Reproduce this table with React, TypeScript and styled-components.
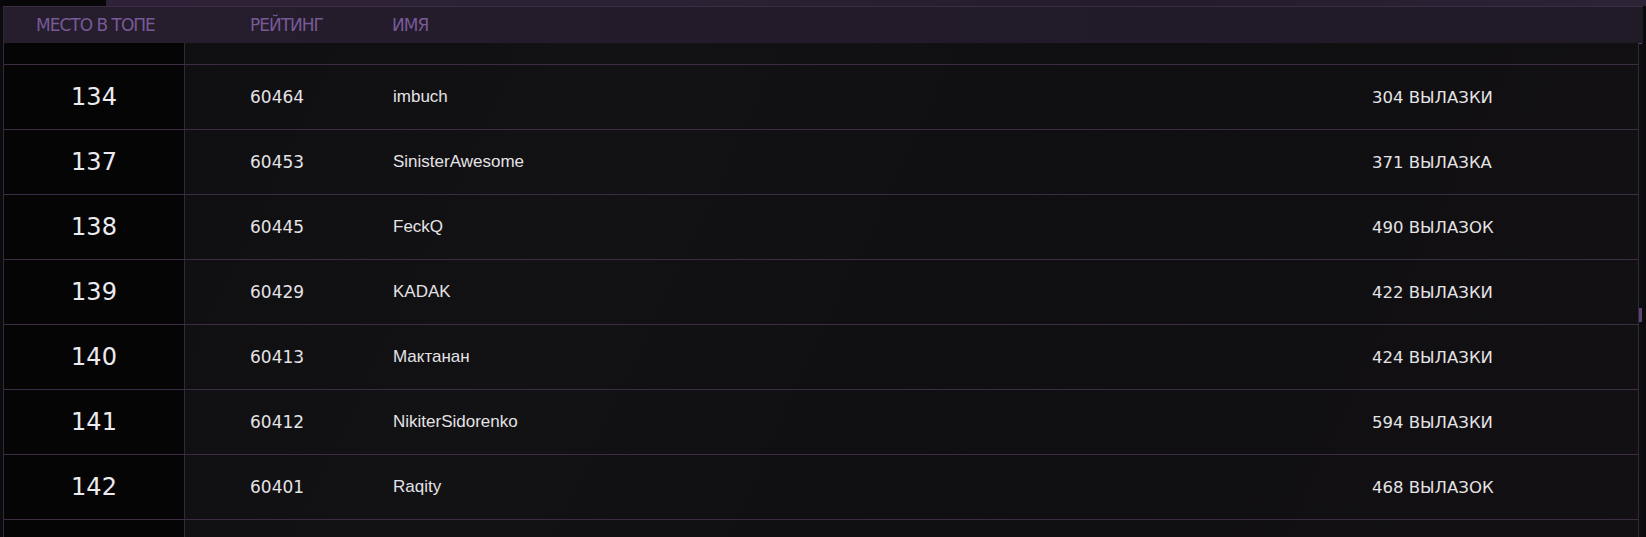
import React from "react";
import styled, { createGlobalStyle } from "styled-components";

const Global = createGlobalStyle`
  html, body { margin: 0; padding: 0; background: #0b0a0c; overflow: hidden; }
  body { font-family: "DejaVu Sans", sans-serif; color: #e4e3e6; }
`;

const Page = styled.div`
  width: 1646px;
  height: 537px;
  display: flex;
  flex-direction: column;
  background: #0b0a0c;
  overflow: hidden;
`;

const TopStrip = styled.div`
  height: 6px;
  display: flex;
  background: linear-gradient(90deg, #2f2239 0%, #2a2133 45%, #241c2c 70%, #2d2337 100%);
`;

const StripDark = styled.div`
  width: 106px;
  background: #070608;
`;

const Frame = styled.div`
  flex: 1;
  display: flex;
  flex-direction: column;
  margin-left: 3px;
  width: 1640px;
  min-height: 0;
`;

const Header = styled.div`
  height: 36px;
  border-top: 1px solid #3a2d44;
  border-left: 1px solid #2f2536;
  background: linear-gradient(90deg, #261d2d 0%, #231b2a 50%, #211a27 100%);
  display: grid;
  grid-template-columns: 214px 142px 1fr;
  align-items: center;
  padding-left: 32px;
`;

const HeadCell = styled.div`
  font-family: "DejaVu Sans", sans-serif;
  font-size: 17px;
  letter-spacing: -1px;
  color: #785a98;
  text-transform: uppercase;
`;

const BodyArea = styled.div`
  flex: 1;
  display: flex;
  min-height: 0;
`;

const Scroll = styled.div`
  width: 1637px;
  overflow: hidden;
  border-left: 1px solid #33283b;
  border-right: 1px solid #33283b;
  background: linear-gradient(115deg, #0e0d0f 0%, #121113 35%, #0f0e10 60%, #121012 100%);
`;

const List = styled.div`
  margin-top: -43px;
  display: flex;
  flex-direction: column;
`;

const Row = styled.div`
  display: grid;
  grid-template-columns: 181px 208px 979px 1fr;
  height: 65px;
  border-bottom: 1px solid #3a2d44;
  box-sizing: border-box;
  align-items: stretch;
`;

const RankCell = styled.div`
  background: #060506;
  border-right: 1px solid #33283b;
  display: flex;
  align-items: center;
  justify-content: center;
  font-family: "DejaVu Sans", sans-serif;
  font-size: 24px;
  color: #eceaee;
`;

const Cell = styled.div<{ $pad?: number; $font?: string; $size?: number }>`
  display: flex;
  align-items: center;
  padding-left: ${(p) => p.$pad ?? 0}px;
  font-family: ${(p) => p.$font ?? '"DejaVu Sans", sans-serif'};
  font-size: ${(p) => p.$size ?? 17}px;
  color: #e4e3e6;
  white-space: nowrap;
`;

const ScrollBar = styled.div`
  width: 4px;
  position: relative;
  background: #0d0c0e;
`;

const Thumb = styled.div<{ $top: number; $h: number }>`
  position: absolute;
  left: 0;
  width: 3px;
  top: ${(p) => p.$top}px;
  height: ${(p) => p.$h}px;
  background: #5b4470;
`;

type Item = { rank: number | string; rating: string; name: string; runs: string };

const rows: Item[] = [
  { rank: "", rating: "", name: "", runs: "" },
  { rank: 134, rating: "60464", name: "imbuch", runs: "304 ВЫЛАЗКИ" },
  { rank: 137, rating: "60453", name: "SinisterAwesome", runs: "371 ВЫЛАЗКА" },
  { rank: 138, rating: "60445", name: "FeckQ", runs: "490 ВЫЛАЗОК" },
  { rank: 139, rating: "60429", name: "KADAK", runs: "422 ВЫЛАЗКИ" },
  { rank: 140, rating: "60413", name: "Мактанан", runs: "424 ВЫЛАЗКИ" },
  { rank: 141, rating: "60412", name: "NikiterSidorenko", runs: "594 ВЫЛАЗКИ" },
  { rank: 142, rating: "60401", name: "Raqity", runs: "468 ВЫЛАЗОК" },
  { rank: "", rating: "", name: "", runs: "" },
];

export default function App() {
  return (
    <Page>
      <Global />
      <TopStrip>
        <StripDark />
      </TopStrip>
      <Frame>
        <Header>
          <HeadCell>Место в топе</HeadCell>
          <HeadCell>Рейтинг</HeadCell>
          <HeadCell>Имя</HeadCell>
        </Header>
        <BodyArea>
          <Scroll>
            <List>
              {rows.map((r, i) => (
                <Row key={i}>
                  <RankCell>{r.rank}</RankCell>
                  <Cell $pad={65}>{r.rating}</Cell>
                  <Cell $font='"Liberation Sans", Arial, sans-serif'>{r.name}</Cell>
                  <Cell $size={16.5}>{r.runs}</Cell>
                </Row>
              ))}
            </List>
          </Scroll>
          <ScrollBar>
            <Thumb $top={0} $h={1} />
            <Thumb $top={265} $h={14} />
          </ScrollBar>
        </BodyArea>
      </Frame>
    </Page>
  );
}
